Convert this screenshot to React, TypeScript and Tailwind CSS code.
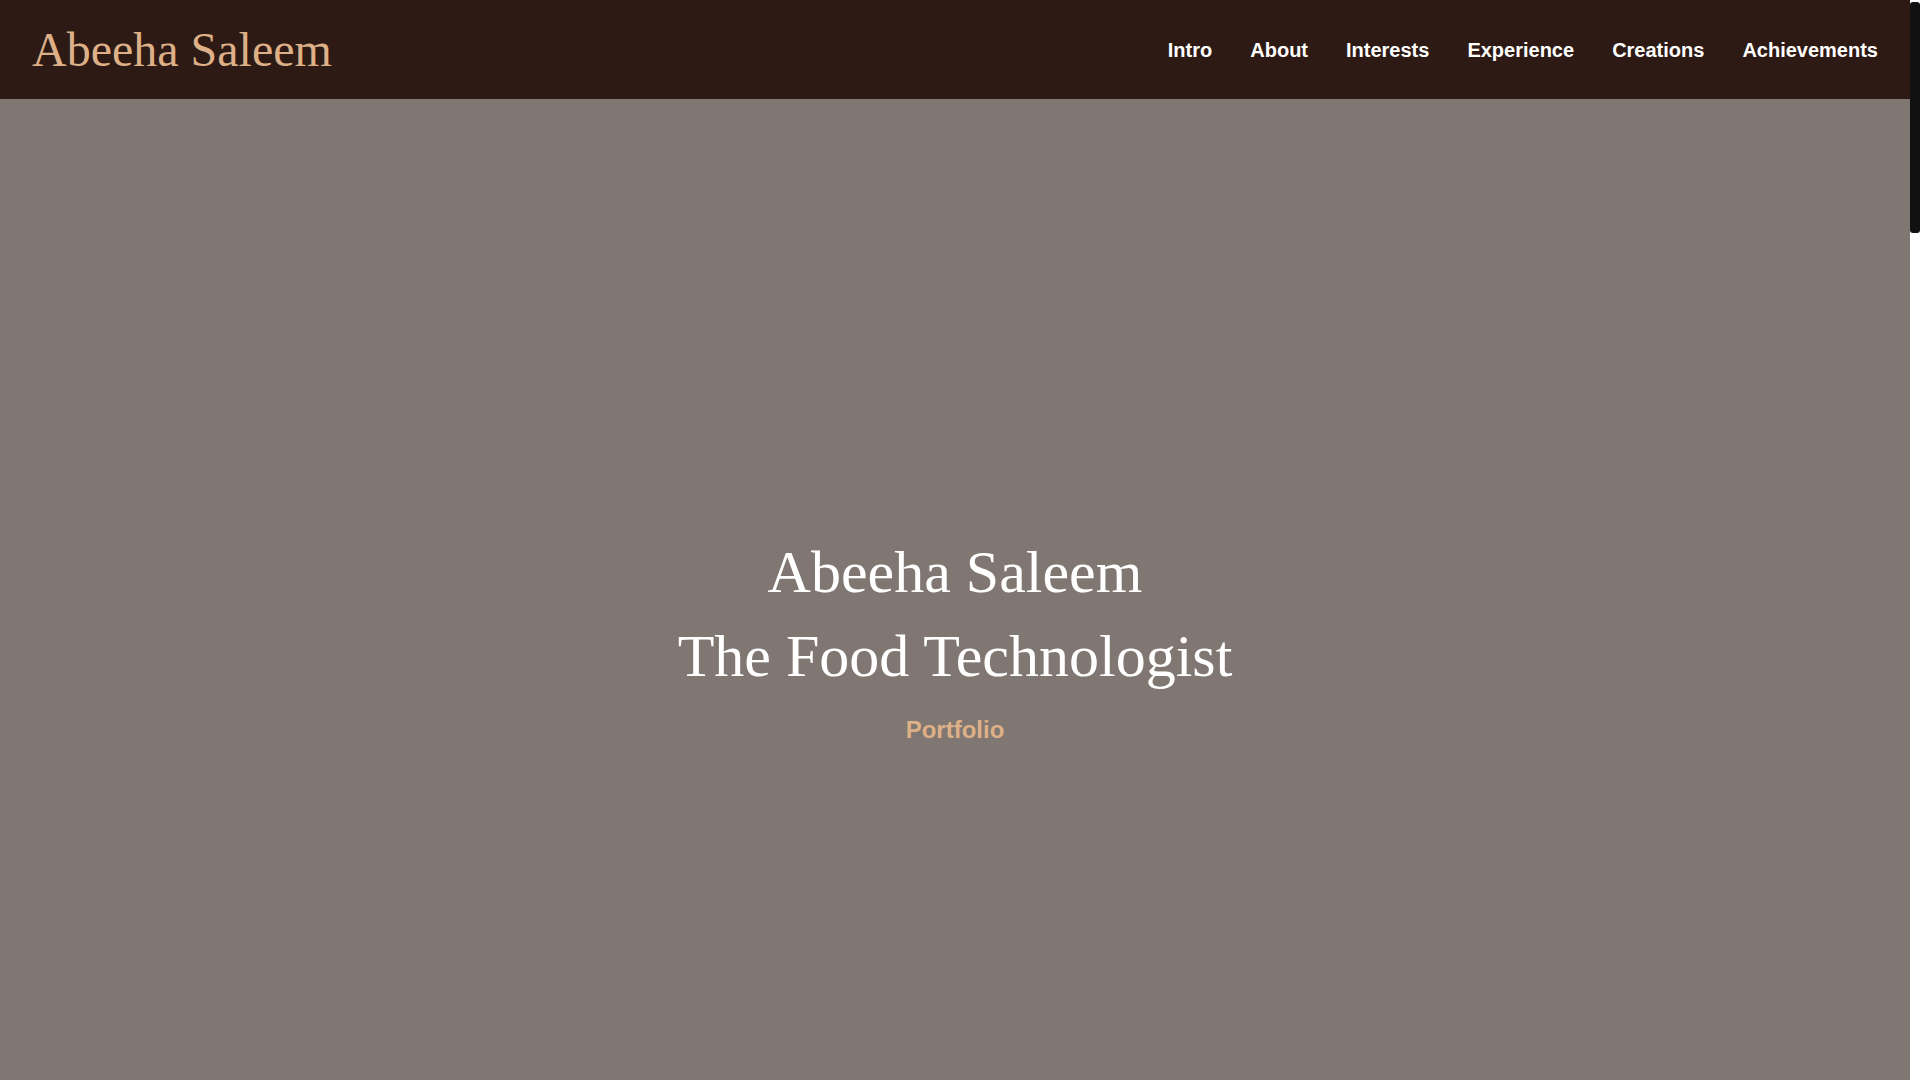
const links = ["Intro", "About", "Interests", "Experience", "Creations", "Achievements"];

const sections = ["about", "interests", "experience", "creations", "achievements"];

export default function App() {
  return (
    <div className="flex h-screen overflow-hidden bg-white">
      <main className="min-w-0 flex-1 overflow-hidden">
        <nav className="flex h-[99px] items-center justify-between bg-[#2e1a14] px-8">
          <a
            href="#intro"
            className="text-[48px] leading-none text-[#deb087]"
            style={{ fontFamily: '"Liberation Serif", "Times New Roman", serif' }}
          >
            Abeeha Saleem
          </a>
          <ul
            className="flex items-center gap-[38px] text-[20px] font-bold text-white"
            style={{ fontFamily: '"Liberation Sans", Arial, sans-serif' }}
          >
            {links.map((l) => (
              <li key={l}>
                <a href={`#${l.toLowerCase()}`}>{l}</a>
              </li>
            ))}
          </ul>
        </nav>

        <section
          id="intro"
          className="flex h-screen flex-col items-center justify-center bg-[#807672] text-center"
        >
          <h1
            className="text-[60px] font-normal leading-[84px] text-white"
            style={{ fontFamily: '"Liberation Serif", "Times New Roman", serif' }}
          >
            Abeeha Saleem
            <br />
            The Food Technologist
          </h1>
          <p
            className="mt-[14px] text-[24px] font-bold leading-[36px] text-[#deb087]"
            style={{ fontFamily: '"Liberation Sans", Arial, sans-serif' }}
          >
            Portfolio
          </p>
        </section>

        {sections.map((s) => (
          <section key={s} id={s} className="h-[775px] bg-white" />
        ))}
      </main>

      {/* page scrollbar (thin dark thumb on white track) */}
      <div className="w-[10px] shrink-0 bg-white pt-[2px]">
        <div className="h-[231px] rounded-[3px] bg-[#111111]" />
      </div>
    </div>
  );
}
